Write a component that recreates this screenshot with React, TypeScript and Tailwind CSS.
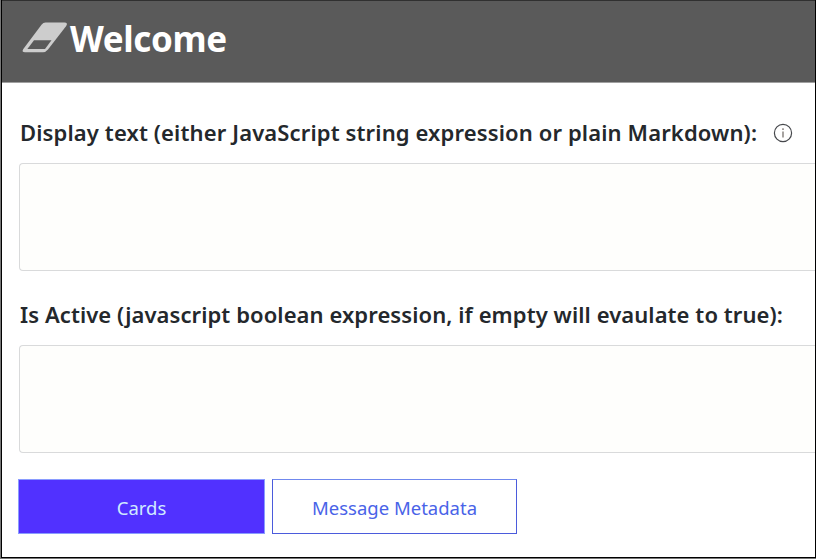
import React from "react";

function EraserIcon() {
  return (
    <svg className="ml-[19px] mt-[20px] h-8 w-12 shrink-0" viewBox="0 0 48 32" fill="none">
      <path
        d="M24.5 1.5H43.5Q47.3 1.5 45.2 5L27 28.6Q24.8 31.3 22 31.3H4Q.3 31.3 2.3 28L20.5 3.7Q22.2 1.5 24.5 1.5Z"
        fill="#cdcdcd"
      />
      <path d="M13 19.3H30.5L24 28H6.4Z" fill="#5a5a5a" />
    </svg>
  );
}

function InfoIcon() {
  return (
    <svg className="ml-[16px] mt-0.5 size-5 shrink-0" viewBox="0 0 20 20" fill="none">
      <circle cx="10" cy="10" r="8.6" stroke="#46484c" strokeWidth="1.2" />
      <path d="M10 8.5V14.4" stroke="#77716d" strokeWidth="1.3" />
      <circle cx="10" cy="6.1" r=".9" fill="#77716d" />
    </svg>
  );
}

function Field({ label, info = false }: { label: React.ReactNode; info?: boolean }) {
  return (
    <section className="mb-[27px]">
      <div className="flex h-[47px] items-start pl-px text-[22px] leading-[32px] font-semibold text-[#24282c]">
        <div className="flex h-8 items-center whitespace-nowrap">
          {label}
          {info && <InfoIcon />}
        </div>
      </div>
      <div className="h-[108px] rounded-l-[4px] border border-r-0 border-[#d9dadb] bg-[#fefefc]" />
    </section>
  );
}

export default function App() {
  return (
    <main className="flex h-[559px] w-[816px] flex-col overflow-hidden border-b border-l border-[#777] font-['Noto_Sans','Open_Sans',sans-serif]">
      <div className="flex flex-1 flex-col border-x border-b border-black bg-white">
        <header className="flex h-[83px] shrink-0 border-t border-b border-t-[#303030] border-b-[#a0a0a0] bg-[#5a5a5a]">
          <EraserIcon />
          <h1 className="mt-[14px] ml-px whitespace-nowrap text-[35px] leading-[48px] font-bold text-white">
            <span className="inline-block tracking-[-0.4px]">Welcome</span>
          </h1>
        </header>
        <div className="flex flex-col pt-[33px] pl-[17px]">
          <Field
            info
            label={<span className="tracking-[0.13px]">Display text (either JavaScript string expression or plain Markdown):</span>}
          />
          <Field
            label={<span className="tracking-[0.08px]">Is Active (javascript boolean expression, if empty will evaulate to true):</span>}
          />
          <div className="-mt-px -ml-px flex gap-[7px] text-[18.5px]">
            <button className="h-[55px] w-[247px] border border-[#8a9cff] bg-[#5131ff] pt-0.5 text-[#cfeaff]">
              <span>Cards</span>
            </button>
            <button className="h-[55px] w-[245px] border border-[#4b5bdc] border-t-[#7088ee] bg-white pt-0.5 text-[#4963e8]">
              <span>Message Metadata</span>
            </button>
          </div>
        </div>
      </div>
    </main>
  );
}
